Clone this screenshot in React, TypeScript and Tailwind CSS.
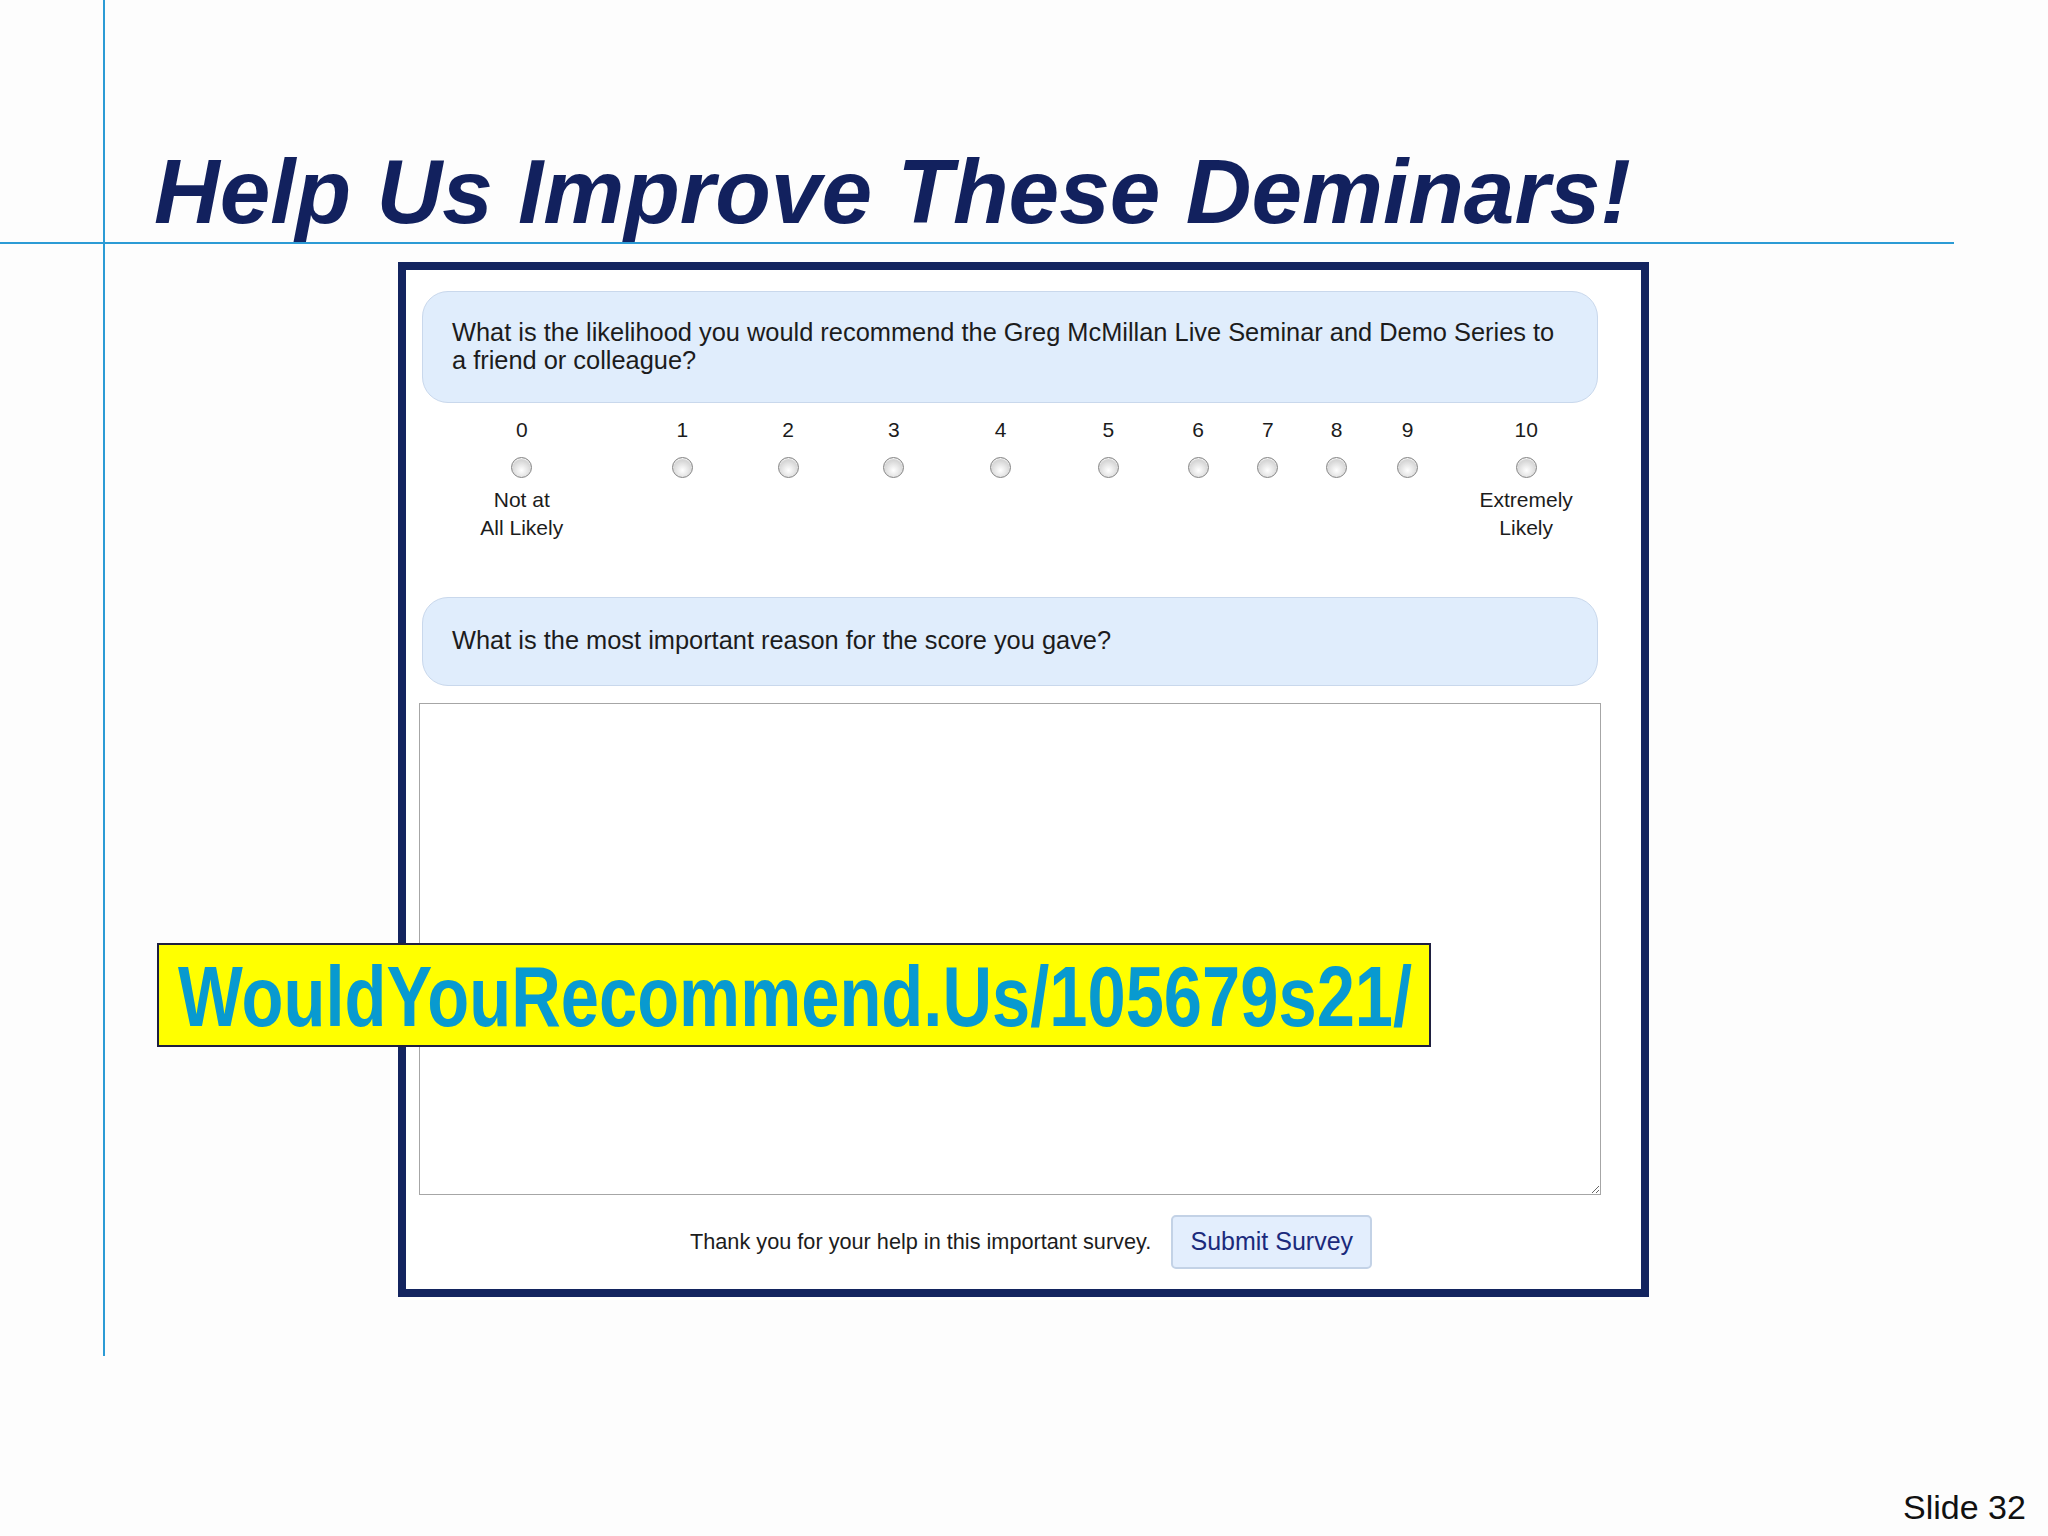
import React from 'react';

// centre positions of the 0..10 scale are uneven in the source form, so each cell has its own width
const scale = [
  { n: '0', w: 'w-[200px]', label: ['Not at', 'All Likely'] },
  { n: '1', w: 'w-[122px]' },
  { n: '2', w: 'w-[90px]' },
  { n: '3', w: 'w-[122px]' },
  { n: '4', w: 'w-[92px]' },
  { n: '5', w: 'w-[124px]' },
  { n: '6', w: 'w-[56px]' },
  { n: '7', w: 'w-[84px]' },
  { n: '8', w: 'w-[54px]' },
  { n: '9', w: 'w-[88px]' },
  { n: '10', w: 'w-[150px]', label: ['Extremely', 'Likely'] },
];

const Radio = () => (
  <div className="w-[21px] h-[21px] rounded-full border border-[#858585] bg-[radial-gradient(circle_at_50%_65%,#ffffff_0%,#e2e2e2_45%,#bcbcbc_100%)] shadow-[inset_0_1px_1px_rgba(255,255,255,0.9)]" />
);

const QuestionBox = ({ children, className }: { children: React.ReactNode; className: string }) => (
  <div
    className={`mx-[3px] rounded-[26px] border border-[#c9d8ec] bg-[#e0edfc] pl-[29px] pr-[20px] text-[25.4px] leading-[28px] text-[#1c1c1c] ${className}`}
  >
    {children}
  </div>
);

export default function App() {
  return (
    <div className="relative w-[2048px] h-[1536px] overflow-hidden bg-[#fdfdfd] font-['Liberation_Sans',Arial,sans-serif]">
      {/* slide guide lines */}
      <div className="absolute left-[103px] top-0 h-[1356px] w-[2px] bg-[#2c9bd5]" />
      <div className="absolute left-0 top-[242px] h-[2px] w-[1954px] bg-[#2c9bd5]" />

      <h1 className="pl-[154px] pt-[146px] text-[91px] leading-[92px] font-bold italic text-[#12215e] m-0">
        Help Us Improve These Deminars!
      </h1>

      {/* survey screenshot frame */}
      <div className="mt-[24px] ml-[398px] w-[1251px] h-[1035px] border-[8px] border-[#13245f] bg-white">
        <div className="pl-[13px] pt-[21px] w-[1195px] flex flex-col">
          <QuestionBox className="h-[112px] pt-[26px]">
            What is the likelihood you would recommend the Greg McMillan Live Seminar and Demo Series to
            <br />a friend or colleague?
          </QuestionBox>

          <div className="ml-[3px] mt-[13px] flex h-[125px] text-[21px] leading-[28px] text-[#1c1c1c]">
            {scale.map((s) => (
              <div key={s.n} className={`${s.w} flex flex-col items-center`}>
                <span>{s.n}</span>
                <div className="mt-[13px]">
                  <Radio />
                </div>
                {s.label && (
                  <div className="mt-[8px] text-center whitespace-nowrap">
                    {s.label[0]}
                    <br />
                    {s.label[1]}
                  </div>
                )}
              </div>
            ))}
          </div>

          <QuestionBox className="mt-[56px] h-[89px] pt-[28px]">
            What is the most important reason for the score you gave?
          </QuestionBox>

          <textarea
            className="mt-[17px] w-[1182px] h-[492px] border border-[#a6a6a6] bg-white outline-none"
            defaultValue=""
          />

          <div className="mt-[20px] flex items-center gap-[20px] pl-[271px] h-[54px]">
            <span className="text-[21.7px] text-[#1c1c1c]">
              Thank you for your help in this important survey.
            </span>
            <button className="h-[54px] w-[201px] rounded-[5px] border-2 border-[#c3d2e6] bg-[#e3eefd] text-[25px] text-[#1b2a7c]">
              Submit Survey
            </button>
          </div>
        </div>
      </div>

      {/* yellow URL banner over the form */}
      <div className="absolute left-[157px] top-[943px] w-[1274px] h-[104px] border-2 border-[#1f2040] bg-[#ffff00] flex items-center pl-[19px]">
        <span className="inline-block origin-left scale-x-[0.808] whitespace-nowrap font-bold text-[85px] leading-none text-[#089ad0] mt-[3px]">
          WouldYouRecommend.Us/105679s21/
        </span>
      </div>

      <div className="absolute left-[1903px] top-[1490px] text-[34px] leading-[34px] text-[#111]">Slide 32</div>
    </div>
  );
}
